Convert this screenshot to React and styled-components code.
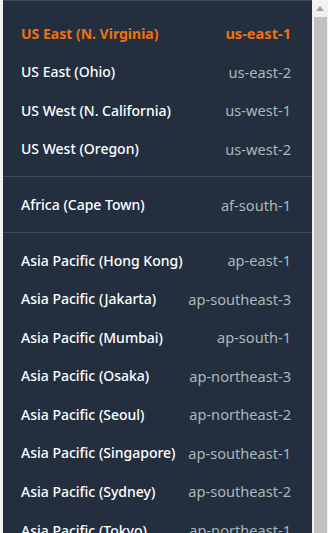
import React from 'react';
import styled, { createGlobalStyle } from 'styled-components';

const GlobalStyle = createGlobalStyle`
    html, body {
        margin: 0;
        padding: 0;
        background: #ffffff;
    }
`;

const Frame = styled.div`
    display: flex;
    height: 533px;
    overflow: hidden;
    padding-left: 3px;
    background: #f3f3f3;
`;

const Menu = styled.div`
    flex: 1;
    background-color: #232f3e;
    border-top: 1px solid #414d5c;
    padding-top: 5px;
    font-family: "Noto Sans", "Open Sans", sans-serif;
    font-size: 14px;
    overflow: hidden;
`;

const Group = styled.div`
    padding: 8px 0;
    border-top: ${(p) => (p.first ? 'none' : '1px solid #414d5c')};
`;

const Row = styled.div`
    display: flex;
    align-items: center;
    justify-content: space-between;
    height: 38.57px;
    padding: 0 21px 0 18px;
    color: ${(p) => (p.selected ? '#ec7211' : '#ffffff')};
`;

const Name = styled.span`
    font-weight: ${(p) => (p.selected ? 700 : 500)};
    white-space: nowrap;
`;

const Code = styled.span`
    font-size: 14.6px;
    color: ${(p) => (p.selected ? '#ec7211' : '#aab7b8')};
    font-weight: ${(p) => (p.selected ? 700 : 400)};
    white-space: nowrap;
`;

const Scrollbar = styled.div`
    width: 16px;
    flex-shrink: 0;
    display: flex;
    flex-direction: column;
    align-items: center;
    background: #f1f1f1;
`;

const Arrow = styled.div`
    height: 17px;
    display: flex;
    align-items: center;
    justify-content: center;
`;

const Thumb = styled.div`
    flex: 1;
    width: 13px;
    margin-left: 1px;
    background: #c1c1c1;
`;

const groups = [
    [
        ['US East (N. Virginia)', 'us-east-1', true],
        ['US East (Ohio)', 'us-east-2'],
        ['US West (N. California)', 'us-west-1'],
        ['US West (Oregon)', 'us-west-2'],
    ],
    [['Africa (Cape Town)', 'af-south-1']],
    [
        ['Asia Pacific (Hong Kong)', 'ap-east-1'],
        ['Asia Pacific (Jakarta)', 'ap-southeast-3'],
        ['Asia Pacific (Mumbai)', 'ap-south-1'],
        ['Asia Pacific (Osaka)', 'ap-northeast-3'],
        ['Asia Pacific (Seoul)', 'ap-northeast-2'],
        ['Asia Pacific (Singapore)', 'ap-southeast-1'],
        ['Asia Pacific (Sydney)', 'ap-southeast-2'],
        ['Asia Pacific (Tokyo)', 'ap-northeast-1'],
    ],
];

const App = () => {
    return (
        <>
            <GlobalStyle />
            <Frame>
                <Menu>
                    {groups.map((rows, i) => (
                        <Group key={i} first={i === 0}>
                            {rows.map(([name, code, selected]) => (
                                <Row key={code} selected={selected}>
                                    <Name selected={selected}>{name}</Name>
                                    <Code selected={selected}>{code}</Code>
                                </Row>
                            ))}
                        </Group>
                    ))}
                </Menu>
                <Scrollbar>
                    <Arrow>
                        <svg width="8" height="5" viewBox="0 0 8 5">
                            <path d="M4 0 L8 5 L0 5 Z" fill="#a3a3a3" />
                        </svg>
                    </Arrow>
                    <Thumb />
                </Scrollbar>
            </Frame>
        </>
    );
};

export default App;
